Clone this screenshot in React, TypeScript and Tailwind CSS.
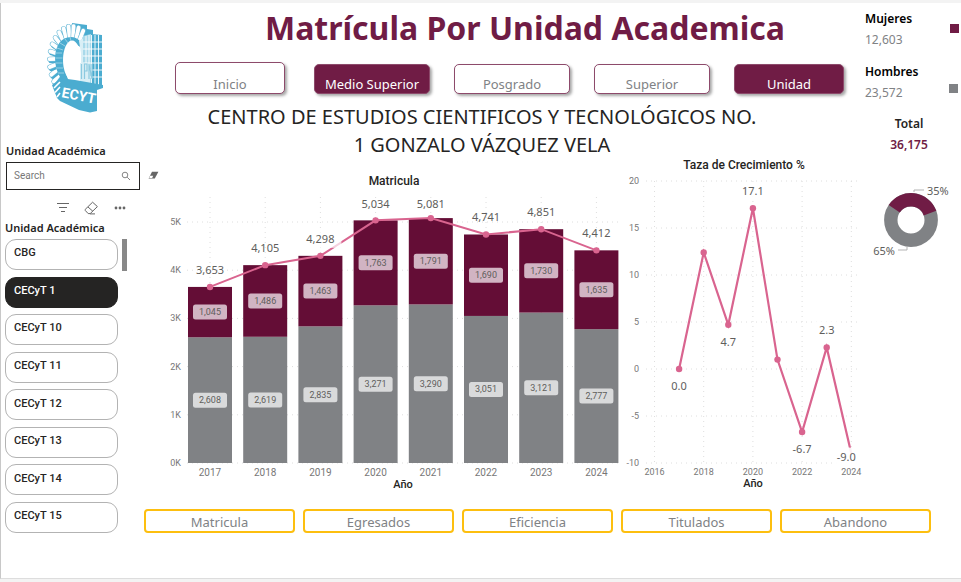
import React from "react";

const SANS = "font-['Noto_Sans','Open_Sans',sans-serif]";

const topTabs = [
  { label: "Inicio", active: false, box: "w-[110px] h-8 mr-[5px] self-start" },
  { label: "Medio Superior", active: true, box: "w-[116px] h-[30px]" },
  { label: "Posgrado", active: false, box: "w-[116px] h-[30px]" },
  { label: "Superior", active: false, box: "w-[116px] h-[30px]" },
  { label: "Unidad", active: true, box: "w-[110px] h-[30px]" },
];

const bottomTabs = ["Matricula", "Egresados", "Eficiencia", "Titulados", "Abandono"];

const units = ["CBG", "CECyT 1", "CECyT 10", "CECyT 11", "CECyT 12", "CECyT 13", "CECyT 14", "CECyT 15"];

const enrolment = [
  { year: 2017, men: 2608, women: 1045 },
  { year: 2018, men: 2619, women: 1486 },
  { year: 2019, men: 2835, women: 1463 },
  { year: 2020, men: 3271, women: 1763 },
  { year: 2021, men: 3290, women: 1791 },
  { year: 2022, men: 3051, women: 1690 },
  { year: 2023, men: 3121, women: 1730 },
  { year: 2024, men: 2777, women: 1635 },
];

const growth = [
  { year: 2017, value: 0, label: "0.0", dx: 0, dy: 17 },
  { year: 2018, value: 12.4, label: "", dx: 0, dy: 0 },
  { year: 2019, value: 4.7, label: "4.7", dx: 0, dy: 17 },
  { year: 2020, value: 17.1, label: "17.1", dx: 0, dy: -17 },
  { year: 2021, value: 1, label: "", dx: 0, dy: 0 },
  { year: 2022, value: -6.7, label: "-6.7", dx: 0, dy: 17 },
  { year: 2023, value: 2.3, label: "2.3", dx: 0, dy: -17 },
  { year: 2024, value: -9, label: "-9.0", dx: -5, dy: 3 },
];

const fmt = (n: number) => n.toLocaleString("en-US");

function Logo() {
  const teeth = Array.from({ length: 15 }, (_, i) => {
    const a = ((118 + i * 13) * Math.PI) / 180;
    return {
      x1: 27 + 15 * Math.cos(a),
      y1: 39 + 23 * Math.sin(a),
      x2: 27 + 22.5 * Math.cos(a),
      y2: 40 + 35 * Math.sin(a),
    };
  });
  return (
    <svg width="60" height="94" viewBox="0 0 60 94" role="img" aria-label="CECyT">
      <path d="M27 2 L42 4 L42 8 L48 9 L48 15 L38 22 L28 20Z" fill="#4bacd0" />
      {teeth.map((t, i) => (
        <g key={i} strokeLinecap="round">
          <line x1={t.x1 + 1.6} y1={t.y1 + 1.6} x2={t.x2 + 1.4} y2={t.y2 + 1.6} stroke="#4bacd0" strokeWidth="5" />
          <line x1={t.x1} y1={t.y1} x2={t.x2} y2={t.y2} stroke="#6fbcd9" strokeWidth="5" />
          <line x1={t.x1} y1={t.y1} x2={t.x2} y2={t.y2} stroke="#fff" strokeWidth="3.8" />
        </g>
      ))}
      <path d="M20 62 C6 50 6 16 26 16 C33 16 37 21 37 27 L32 24 C20 15 14 40 24 60Z" fill="#4bacd0" />
      <ellipse cx="27" cy="39" rx="9" ry="19.5" fill="#fff" />
      <path d="M11 32 h6 M10.5 37 h7 M10.5 42 h7 M11 47 h7 M13 52 h6 M12 27 l6 2 M15 22 l5 3 M20 18 l3 4 M25 16 l1 4" stroke="#a9d9ea" strokeWidth="0.8" />
      <path d="M34 20 L38 17 V62 H36 V32Z" fill="#d9eff6" />
      <path d="M38 15 L46 13 V63 H38Z" fill="#a9d9ea" />
      <path d="M46 13 L57 14 V64 H46Z" fill="#4bacd0" />
      <path d="M41 15 V62 M44 14 V62 M46.5 14 V64 M50 14 V64 M53.5 14 V64" stroke="#fff" strokeWidth="0.9" />
      <path d="M38 21 H57 M38 28 H57 M38 35 H57 M38 42 H57 M38 49 H57 M38 56 H57" stroke="#fff" strokeWidth="0.9" />
      <path d="M35 42 H45 V62 H35Z" fill="#d9eff6" />
      <path d="M36.5 43 V58 M39.5 58 V43 H42 V50 H39.5 M44 58 V43 L47 58 V43" fill="none" stroke="#8ccae0" strokeWidth="1.2" />
      <path d="M15 57 L30 59 L47 62 L58 64 L58 67 L52 69 L52 90 L45 91.5 L34 89 L15 80Z" fill="#4bacd0" />
      <path d="M7 64 L15 58 V80 L12 77Z" fill="#4bacd0" />
      <path d="M9 67 L15 61 M10 71.5 L15 66 M12 76 L15 72" stroke="#fff" strokeWidth="1.6" />
      <text x="16" y="76" transform="rotate(11 16 76)" fill="#fff" fontSize="14" fontWeight="700" className="font-['Roboto',sans-serif]">
        ECYT
      </text>
    </svg>
  );
}

function Sidebar() {
  return (
    <aside className="w-[143px] shrink-0 pl-1">
      <div className="flex h-[141px] justify-center pt-[18px]">
        <Logo />
      </div>
      <label htmlFor="unit-search" className="block pl-px text-[11px] leading-[14px] font-semibold text-[#252423]">
        Unidad Académica
      </label>
      <div className="relative mt-1 ml-px h-[28px] w-[134px] border border-[#252423]">
        <input
          id="unit-search"
          type="text"
          placeholder="Search"
          className="block h-6 w-full pr-7 pl-[7px] font-['Roboto',sans-serif] text-[10px] text-[#555] outline-none placeholder:text-[#777]"
        />
        <svg className="absolute top-2 right-2" width="10" height="10" viewBox="0 0 10 10" fill="none" stroke="#666" strokeWidth="0.8">
          <circle cx="4" cy="4" r="2.8" />
          <path d="M6.2 6.2 L9 9" />
        </svg>
        <button type="button" aria-label="Clear search" className="absolute top-2 -right-5">
          <svg width="11" height="9" viewBox="0 0 11 9">
            <path d="M4 0.8 H10.4 L6.8 7.6 H0.6Z" fill="#666" />
            <path d="M2 4.8 H5.2 L4.2 7 H1.2Z" fill="#fff" />
          </svg>
        </button>
      </div>
      <div className="mt-2.5 flex h-4 items-center gap-3.5 pl-[51px]">
        <button type="button" aria-label="Filter">
          <svg width="14" height="14" viewBox="0 0 14 14" stroke="#666" strokeWidth="1">
            <path d="M1 2.5 H13 M3 6.5 H11 M5 10.5 H9" />
          </svg>
        </button>
        <button type="button" aria-label="Clear selection">
          <svg width="15" height="14" viewBox="0 0 15 14" fill="none" stroke="#666" strokeWidth="1">
            <path d="M8.6 1.2 L13.4 5.6 L6.2 12.6 H4.2 L1.2 9.4 V8.4Z M4 6 L8.8 10.2 M6 12.9 H11" />
          </svg>
        </button>
        <button type="button" aria-label="More options">
          <svg width="14" height="14" viewBox="0 0 14 14" fill="#666">
            <circle cx="3" cy="7" r="1.4" />
            <circle cx="7" cy="7" r="1.4" />
            <circle cx="11" cy="7" r="1.4" />
          </svg>
        </button>
      </div>
      <h2 className="mt-[5px] text-[11px] leading-[14px] font-semibold text-[#252423]">Unidad Académica</h2>
      <div className="mt-1 flex items-start gap-1">
        <div className="flex h-[294px] w-[113px] flex-col justify-between">
          {units.map((u) => (
            <button
              key={u}
              type="button"
              aria-pressed={u === "CECyT 1"}
              className={`flex h-[31px] items-center rounded-[11px] border pb-0.5 pl-2 font-['Roboto',sans-serif] text-[11px] font-medium ${
                u === "CECyT 1" ? "border-[#252423] bg-[#252423] text-white" : "border-[#b3b3b3] bg-white text-[#252423]"
              }`}
            >
              {u}
            </button>
          ))}
        </div>
        <div className="h-8 w-[5px] bg-[#888]" />
      </div>
    </aside>
  );
}

function EnrolmentChart() {
  const y = (v: number) => 276 - v * 0.0482;
  const x = (i: number) => 46 + i * 55.2;
  const total = (i: number) => enrolment[i].men + enrolment[i].women;
  return (
    <svg viewBox="0 0 460 305" className="block h-auto w-full" textAnchor="middle">
      <g stroke="#dedede" strokeDasharray="1 4">
        {[0, 1, 2, 3, 4, 5].map((k) => (
          <line key={k} x1="23" x2="454" y1={y(k * 1000)} y2={y(k * 1000)} />
        ))}
        {enrolment.map((d, i) => (
          <line key={d.year} x1={x(i)} x2={x(i)} y1="10" y2="276" />
        ))}
      </g>
      <g fill="#777" className="font-['Roboto',sans-serif]">
        {[0, 1, 2, 3, 4, 5].map((k) => (
          <text key={k} x="17" y={y(k * 1000) + 3} textAnchor="end" fontSize="9">{k}K</text>
        ))}
        {enrolment.map((d, i) => (
          <text key={d.year} x={x(i)} y="289" fontSize="10">{d.year}</text>
        ))}
      </g>
      {enrolment.map((d, i) => (
        <g key={d.year}>
          <rect x={x(i) - 22} y={y(d.men)} width="44" height={276 - y(d.men)} fill="#808285" />
          <rect x={x(i) - 22} y={y(total(i))} width="44" height={y(d.men) - y(total(i))} fill="#640d36" />
        </g>
      ))}
      <polyline points={enrolment.map((_, i) => `${x(i)},${y(total(i))}`).join(" ")} fill="none" stroke="#d9648f" strokeWidth="2" />
      {enrolment.map((d, i) => {
        const ly = Math.max(17, y(total(i)) - 17);
        const wy = (y(d.men) + y(total(i))) / 2;
        const my = (y(d.men) + 276) / 2;
        return (
          <g key={d.year}>
            <circle cx={x(i)} cy={y(total(i))} r="3.2" fill="#d9648f" />
            {d.year === 2019 && <rect x={x(i) - 21} y={ly - 9} width="42" height="18" fill="#fff" fillOpacity="0.7" />}
            <text x={x(i)} y={ly + 4} fontSize="11" fill="#605e5c">{fmt(total(i))}</text>
            <g fontSize="9" className="font-['Roboto',sans-serif]">
              <rect x={x(i) - 17} y={wy - 7.5} width="34" height="15" rx="2.5" fill="#d1b4c3" />
              <text x={x(i)} y={wy + 3} fill="#605e5c">{fmt(d.women)}</text>
              <rect x={x(i) - 17} y={my - 7.5} width="34" height="15" rx="2.5" fill="#d9dadb" />
              <text x={x(i)} y={my + 3} fill="#605e5c">{fmt(d.men)}</text>
            </g>
          </g>
        );
      })}
      <text x="239" y="301" fontSize="11" fontWeight="500" fill="#252423" className="font-['Roboto',sans-serif]">Año</text>
    </svg>
  );
}

function GrowthChart() {
  const y = (v: number) => 198 - v * 9.4;
  const x = (year: number) => 30.5 + (year - 2016) * 24.6;
  return (
    <svg viewBox="0 0 240 321" className="block h-auto w-full" textAnchor="middle">
      <g stroke="#dedede" strokeDasharray="1 4">
        {[20, 15, 10, 5, 0, -5, -10].map((v) => (
          <line key={v} x1="22" x2="234" y1={y(v)} y2={y(v)} />
        ))}
        {[2016, 2018, 2020, 2022, 2024].map((v) => (
          <line key={v} x1={x(v)} x2={x(v)} y1="10" y2="292" />
        ))}
      </g>
      <g fill="#777" fontSize="9" className="font-['Roboto',sans-serif]">
        {[20, 15, 10, 5, 0, -5, -10].map((v) => (
          <text key={v} x="15" y={y(v) + 3} textAnchor="end">{v}</text>
        ))}
        {[2016, 2018, 2020, 2022, 2024].map((v) => (
          <text key={v} x={x(v)} y="304">{v}</text>
        ))}
      </g>
      <polyline points={growth.map((d) => `${x(d.year)},${y(d.value)}`).join(" ")} fill="none" stroke="#d9648f" strokeWidth="2.2" />
      {growth.map((d) => (
        <g key={d.year}>
          {d.year !== 2024 && <circle cx={x(d.year)} cy={y(d.value)} r="3.2" fill="#d9648f" />}
          {d.label && (
            <>
              <rect x={x(d.year) + d.dx - 14} y={y(d.value) + d.dy - 9} width="28" height="18" fill="#fff" fillOpacity="0.9" />
              <text x={x(d.year) + d.dx} y={y(d.value) + d.dy + 4} fontSize="11" fill="#605e5c">{d.label}</text>
            </>
          )}
        </g>
      ))}
      <text x="129" y="316" fontSize="11" fontWeight="500" fill="#252423" className="font-['Roboto',sans-serif]">Año</text>
    </svg>
  );
}

function Donut() {
  const pt = (deg: number, r: number) => {
    const a = (deg * Math.PI) / 180;
    return `${47 + r * Math.cos(a)} ${37 - r * Math.sin(a)}`;
  };
  return (
    <svg width="97" height="80" viewBox="0 0 97 80">
      <circle cx="47" cy="37" r="20.2" fill="none" stroke="#808285" strokeWidth="13.4" />
      <path d={`M${pt(146, 26.9)} A26.9 26.9 0 0 1 ${pt(20, 26.9)} L${pt(20, 13.5)} A13.5 13.5 0 0 0 ${pt(146, 13.5)}Z`} fill="#701c45" />
      <path d="M50 9 V7 H60 M43 64 V67 H34" fill="none" stroke="#b3b3b3" />
      <text x="63" y="12" fontSize="11" fill="#605e5c">35%</text>
      <text x="31" y="72" fontSize="11" fill="#605e5c" textAnchor="end">65%</text>
    </svg>
  );
}

function Stats() {
  return (
    <aside className="w-[97px] shrink-0 pt-[7px] text-[12px]">
      <dl className="pl-px">
        <div className="flex items-center justify-between pr-0.5">
          <div>
            <dt className="leading-[18px] font-semibold text-black">Mujeres</dt>
            <dd className="pt-0.5 leading-[20px] text-[#808285]">12,603</dd>
          </div>
          <span className="mb-[3px] size-[9px] bg-[#701c45]" />
        </div>
        <div className="mt-[13px] flex items-center justify-between pr-[3px]">
          <div>
            <dt className="leading-[18px] font-semibold text-black">Hombres</dt>
            <dd className="pt-0.5 leading-[20px] text-[#808285]">23,572</dd>
          </div>
          <span className="mt-2.5 size-[9px] bg-[#808285]" />
        </div>
        <div className="mt-3 pr-2 text-center">
          <dt className="leading-[18px] font-semibold text-[#252423]">Total</dt>
          <dd className="pt-0.5 leading-[20px] font-semibold text-[#701c45]">36,175</dd>
        </div>
      </dl>
      <div className="mt-7">
        <Donut />
      </div>
    </aside>
  );
}

export default function App() {
  return (
    <div className={`flex min-h-screen flex-col bg-[#f3f3f3] pt-[3px] pb-[3px] ${SANS}`}>
      <main className="flex flex-1 border-b border-l border-b-[#ddd] border-l-[#c8c8c8] bg-white">
        <Sidebar />
        <div className="min-w-0 flex-1">
          <div className="flex">
            <section className="min-w-0 flex-1">
              <h1 className="pt-1 pl-[42px] text-center text-[32px] leading-[42px] font-bold whitespace-nowrap text-[#701c45]">
                Matrícula Por Unidad Academica
              </h1>
              <nav className="mt-[13px] flex items-end gap-6 pl-[31px]">
                {topTabs.map((t) => (
                  <button
                    key={t.label}
                    type="button"
                    className={`flex items-end justify-center rounded-[5px] border border-[#8d4a6b] text-[13px] leading-[18px] whitespace-nowrap shadow-[2px_2px_3px_rgba(0,0,0,0.35)] ${t.box} ${
                      t.active ? "bg-[#701c45] text-white" : "bg-white text-[#808285]"
                    }`}
                  >
                    {t.label}
                  </button>
                ))}
              </nav>
              <p className="mx-auto mt-[9px] w-[600px] pr-11 text-center text-[20px] leading-[28px] text-[#252423]">
                CENTRO DE ESTUDIOS CIENTIFICOS Y TECNOLÓGICOS NO. 1 GONZALO VÁZQUEZ VELA
              </p>
              <div className="grid grid-cols-[23fr_12fr] items-start pl-5">
                <figure className="mt-4">
                  <figcaption className="text-center font-['Roboto',sans-serif] text-[12px] leading-3 font-medium text-[#252423]">Matricula</figcaption>
                  <EnrolmentChart />
                </figure>
                <figure>
                  <figcaption className="text-center font-['Roboto',sans-serif] text-[12px] leading-3 font-medium text-[#252423]">Taza de Crecimiento %</figcaption>
                  <GrowthChart />
                </figure>
              </div>
            </section>
            <Stats />
          </div>
          <nav className="mt-[17px] flex gap-2 pr-[30px]">
            {bottomTabs.map((t) => (
              <button key={t} type="button" className="h-6 flex-1 rounded-[4px] border-2 border-[#fdbf0f] bg-white pt-0.5 text-[13px] leading-[18px] text-[#808285]">
                {t}
              </button>
            ))}
          </nav>
        </div>
      </main>
    </div>
  );
}
